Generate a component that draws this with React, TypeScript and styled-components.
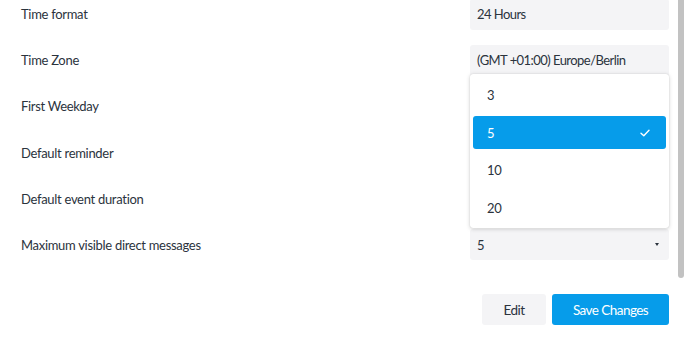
import React from "react";
import styled, { createGlobalStyle } from "styled-components";

const Global = createGlobalStyle`
  html, body { margin: 0; padding: 0; background: #ffffff; }
  body { font-family: "Source Sans Pro", Lato, "Noto Sans", sans-serif; color: #2b333d; }
  * { box-sizing: border-box; }
`;

const Page = styled.div`
  display: flex;
  align-items: flex-start;
  width: 700px;
  height: 340px;
  overflow: hidden;
`;

const Content = styled.div`
  width: 669px;
  padding-left: 21px;
  margin-top: -1.5px;
  display: flex;
  flex-direction: column;
`;

const Form = styled.div`
  display: flex;
  flex-direction: column;
  gap: 15.2px;
`;

const Row = styled.div`
  display: flex;
  align-items: center;
  justify-content: space-between;
  height: 31px;
`;

const Label = styled.div`
  font-size: 13px;
  letter-spacing: -0.3px;
  line-height: 18px;
  color: #2b333d;
`;

const FieldWrap = styled.div`
  position: relative;
  width: 199px;
  height: 31px;
`;

const Field = styled.div`
  width: 100%;
  height: 100%;
  background: #f4f4f6;
  border-radius: 3px;
  display: flex;
  align-items: center;
  justify-content: space-between;
  padding: 0 10px 0 7px;
  font-size: 13px;
  letter-spacing: -0.55px;
  color: #2b333d;
`;

const Caret = styled.span`
  width: 0;
  height: 0;
  border-left: 2.5px solid transparent;
  border-right: 2.5px solid transparent;
  border-top: 3px solid #2b333d;
`;

const Menu = styled.div`
  position: absolute;
  left: 0;
  right: 0;
  bottom: calc(100% + 1px);
  background: #ffffff;
  border-radius: 3px;
  box-shadow: 0 1px 4px rgba(0, 0, 0, 0.18), 0 0 1px rgba(0, 0, 0, 0.2);
  padding: 5px 3px 4px 3px;
  display: flex;
  flex-direction: column;
  gap: 4.5px;
  z-index: 2;
`;

const Option = styled.div<{ $selected?: boolean }>`
  height: 33px;
  border-radius: 3px;
  display: flex;
  align-items: center;
  justify-content: space-between;
  padding: 0 16px 0 14px;
  font-size: 13px;
  letter-spacing: -0.3px;
  background: ${(p) => (p.$selected ? "#069cea" : "transparent")};
  color: ${(p) => (p.$selected ? "#ffffff" : "#2b333d")};
`;

const Actions = styled.div`
  display: flex;
  justify-content: flex-end;
  gap: 6px;
  margin-top: 34px;
`;

const Button = styled.button<{ $primary?: boolean }>`
  height: 31px;
  border: none;
  border-radius: 3px;
  font-family: inherit;
  font-size: 13.5px;
  letter-spacing: -0.55px;
  width: ${(p) => (p.$primary ? "117px" : "64px")};
  padding: 0;
  background: ${(p) => (p.$primary ? "#069cea" : "#f4f4f6")};
  color: ${(p) => (p.$primary ? "#ffffff" : "#2b333d")};
  cursor: pointer;
`;

const ScrollThumb = styled.div`
  margin-left: 9px;
  width: 6px;
  height: 278px;
  background: #c2c2c2;
  border-radius: 0 0 3px 3px;
`;

const Check = () => (
  <svg width="10" height="8" viewBox="0 0 10 8" fill="none">
    <path d="M1 4.2 L3.8 6.8 L9 1.2" stroke="#ffffff" strokeWidth="1.4" strokeLinecap="round" strokeLinejoin="round" />
  </svg>
);

const rows = [
  { label: "Time format", value: "24 Hours" },
  { label: "Time Zone", value: "(GMT +01:00) Europe/Berlin" },
  { label: "First Weekday", value: "" },
  { label: "Default reminder", value: "" },
  { label: "Default event duration", value: "" },
];

const options = ["3", "5", "10", "20"];

export default function App() {
  return (
    <>
      <Global />
      <Page>
        <Content>
          <Form>
            {rows.map((r) => (
              <Row key={r.label}>
                <Label>{r.label}</Label>
                <FieldWrap>
                  <Field>{r.value}</Field>
                </FieldWrap>
              </Row>
            ))}
            <Row>
              <Label>Maximum visible direct messages</Label>
              <FieldWrap>
                <Menu>
                  {options.map((o) => (
                    <Option key={o} $selected={o === "5"}>
                      <span>{o}</span>
                      {o === "5" && <Check />}
                    </Option>
                  ))}
                </Menu>
                <Field>
                  <span>5</span>
                  <Caret />
                </Field>
              </FieldWrap>
            </Row>
          </Form>
          <Actions>
            <Button>Edit</Button>
            <Button $primary>Save Changes</Button>
          </Actions>
        </Content>
        <ScrollThumb />
      </Page>
    </>
  );
}
